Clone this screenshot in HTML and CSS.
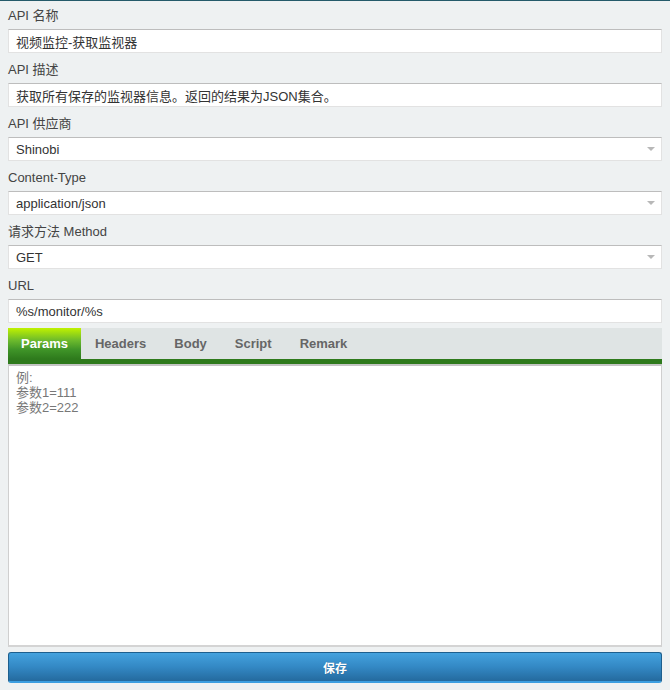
FILE: index.html
```html
<!DOCTYPE html>
<html lang="zh-CN">
<head>
<meta charset="utf-8">
<title>API</title>
<link rel="stylesheet" href="styles.css">
</head>
<body>
<div class="page">
  <form class="form">
    <label class="lbl">API 名称</label>
    <input class="field" type="text" value="视频监控-获取监视器">

    <label class="lbl">API 描述</label>
    <input class="field" type="text" value="获取所有保存的监视器信息。返回的结果为JSON集合。">

    <label class="lbl">API 供应商</label>
    <div class="sel-wrap">
      <select class="field sel"><option>Shinobi</option></select>
    </div>

    <label class="lbl">Content-Type</label>
    <div class="sel-wrap">
      <select class="field sel"><option>application/json</option></select>
    </div>

    <label class="lbl">请求方法 Method</label>
    <div class="sel-wrap">
      <select class="field sel"><option>GET</option></select>
    </div>

    <label class="lbl">URL</label>
    <input class="field" type="text" value="%s/monitor/%s">

    <div class="tabs">
      <span class="tab active">Params</span>
      <span class="tab">Headers</span>
      <span class="tab">Body</span>
      <span class="tab">Script</span>
      <span class="tab">Remark</span>
    </div>
    <textarea class="area" placeholder="例:&#10;参数1=111&#10;参数2=222"></textarea>

    <button class="save" type="button">保存</button>
  </form>
</div>
</body>
</html>
```

FILE: styles.css
```css
html, body {
  margin: 0;
  padding: 0;
  background: #eef1f2;
}
body {
  border-top: 1px solid #245a6a;
  font-family: "Liberation Sans", "Noto Sans CJK SC", Arial, sans-serif;
  font-size: 13px;
  color: #333;
}
.page {
  padding: 0 8px;
}
.form {
  display: flex;
  flex-direction: column;
  margin: 0;
}
.lbl {
  display: block;
  padding: 6px 0 4px;
  line-height: 18px;
  height: 18px;
  font-size: 13px;
  color: #444;
}
.field {
  box-sizing: border-box;
  width: 100%;
  height: 24px;
  margin: 0 0 2px;
  padding: 0 7px;
  border: 1px solid #e2e2e2;
  border-top-color: #bdbdbd;
  background: #fff;
  font-family: "Liberation Sans", "Noto Sans CJK SC", Arial, sans-serif;
  font-size: 13px;
  color: #333;
  outline: none;
}
.sel-wrap {
  position: relative;
}
.sel {
  appearance: none;
  -webkit-appearance: none;
  border-radius: 0;
  display: block;
}
.sel-wrap::after {
  content: "";
  position: absolute;
  right: 7px;
  top: 10px;
  width: 0;
  height: 0;
  border-left: 4px solid transparent;
  border-right: 4px solid transparent;
  border-top: 4px solid #b8b8b8;
  pointer-events: none;
}
.tabs {
  display: flex;
  margin-top: 3px;
  height: 31px;
  background: #dfe4e4;
  border-bottom: 5px solid #2e7a1c;
}
.tab {
  padding: 0 14px 0 14px;
  line-height: 31px;
  font-weight: bold;
  font-size: 13px;
  color: #666;
}
.tab.active {
  padding: 0 13px;
  color: #fff;
  background: linear-gradient(#c0f200 0%, #6cba2c 40%, #3f9428 70%, #2e7a1c 100%);
}
.area {
  box-sizing: border-box;
  display: block;
  width: 100%;
  height: 283px;
  margin: 0;
  padding: 4px 7px;
  border: 1px solid #cfcfcf;
  border-top: 2px solid #c4c4c4;
  border-bottom: 2px solid #d4d4d4;
  background: #fff;
  resize: none;
  font-family: "Liberation Sans", "Noto Sans CJK SC", Arial, sans-serif;
  font-size: 13px;
  line-height: 15px;
  color: #333;
  outline: none;
}
.area::placeholder {
  color: #777;
  opacity: 1;
}
.save {
  box-sizing: border-box;
  display: block;
  width: 100%;
  height: 31px;
  margin-top: 5px;
  border: 1px solid #1d5f8e;
  border-bottom: 2px solid #3c9ee0;
  border-radius: 3px;
  background: linear-gradient(#44a2de 0%, #3388c4 50%, #246a9e 100%);
  color: #fff;
  font-family: "Liberation Sans", "Noto Sans CJK SC", Arial, sans-serif;
  font-size: 12px;
  font-weight: bold;
  text-shadow: 0 0 1px rgba(0, 0, 0, 0.3);
  cursor: pointer;
}
```
